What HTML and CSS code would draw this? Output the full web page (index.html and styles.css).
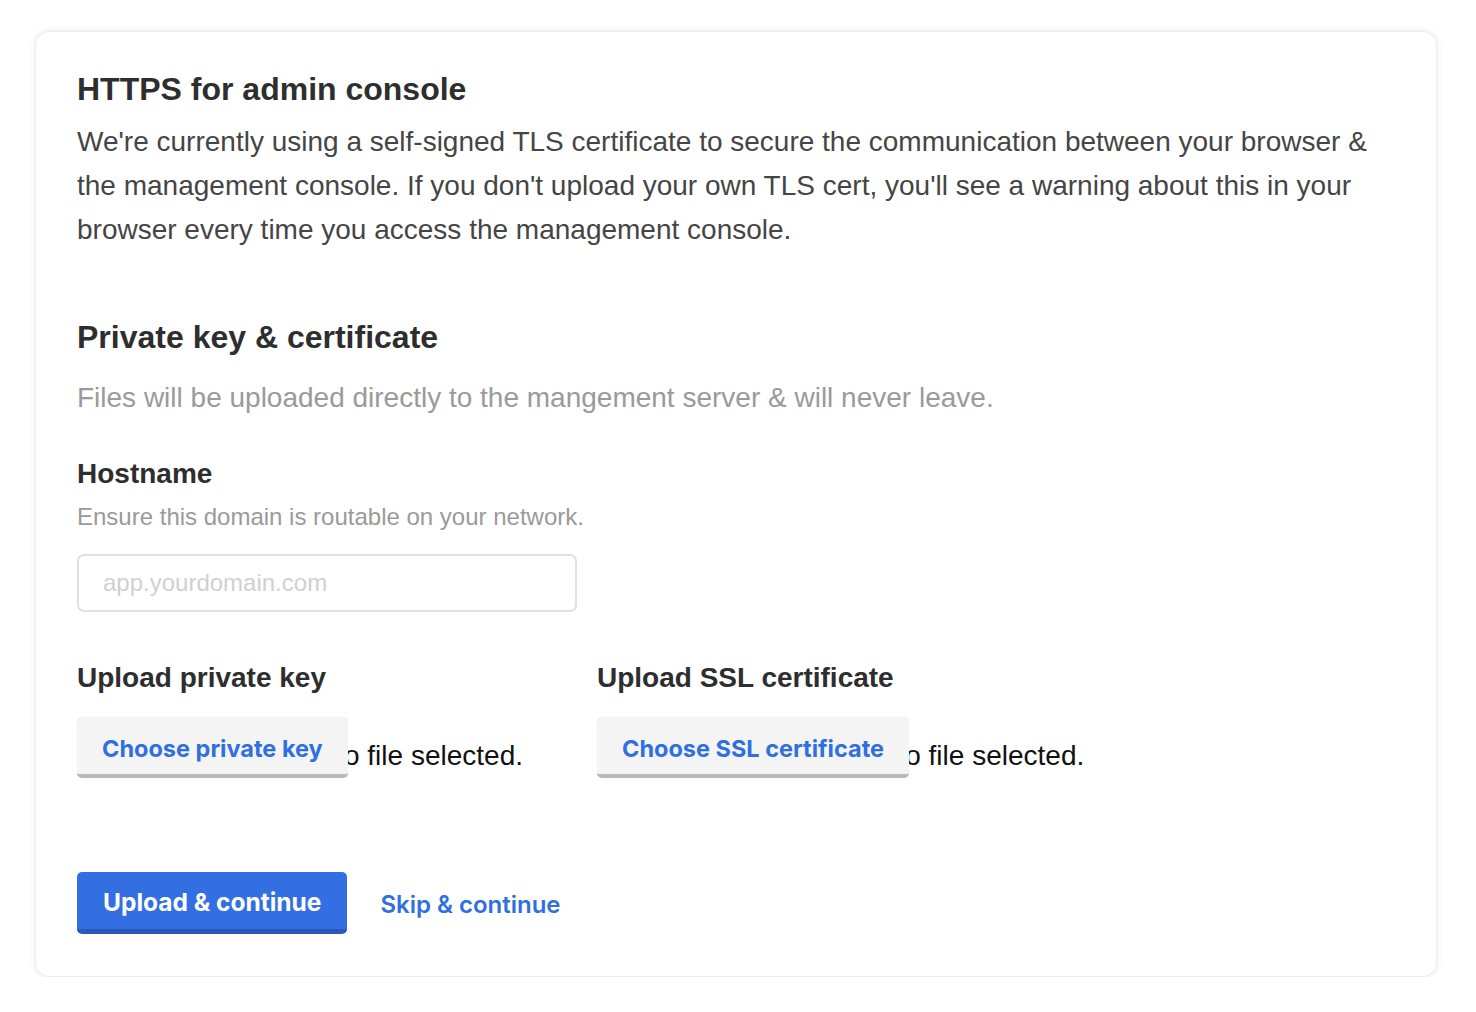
FILE: index.html
```html
<!DOCTYPE html>
<html lang="en">
<head>
<meta charset="utf-8">
<title>HTTPS for admin console</title>
<link rel="stylesheet" href="styles.css">
</head>
<body>
<main class="card">
  <section class="intro">
    <h1 class="title">HTTPS for admin console</h1>
    <p class="lead">We're currently using a self-signed TLS certificate to secure the communication between your browser &amp; the management console. If you don't upload your own TLS cert, you'll see a warning about this in your browser every time you access the management console.</p>
  </section>

  <section class="keys">
    <h2 class="title">Private key &amp; certificate</h2>
    <p class="muted">Files will be uploaded directly to the mangement server &amp; will never leave.</p>

    <div class="field">
      <label class="label" for="host">Hostname</label>
      <p class="hint">Ensure this domain is routable on your network.</p>
      <input id="host" class="input" type="text" placeholder="app.yourdomain.com">
    </div>

    <div class="uploads">
      <div class="upload">
        <h3 class="label big">Upload private key</h3>
        <div class="file-row">
          <button class="file-btn" type="button">Choose private key</button>
          <span class="file-text">No file selected.</span>
        </div>
      </div>
      <div class="upload">
        <h3 class="label big">Upload SSL certificate</h3>
        <div class="file-row">
          <button class="file-btn" type="button">Choose SSL certificate</button>
          <span class="file-text">No file selected.</span>
        </div>
      </div>
    </div>

    <div class="actions">
      <button class="primary" type="button">Upload &amp; continue</button>
      <a class="link" href="#">Skip &amp; continue</a>
    </div>
  </section>
</main>
</body>
</html>
```

FILE: styles.css
```css
* { box-sizing: border-box; }
html, body { margin: 0; padding: 0; background: #ffffff; }
body {
  font-family: "Liberation Sans", Arial, sans-serif;
  color: #333;
  padding: 31px 39px 0 35px;
}
.card {
  border: 1px solid #ececec;
  border-radius: 14px;
  box-shadow: 0 0 7px rgba(0,0,0,0.09);
  background: #fff;
  padding: 35px 40px 42px 41px;
}
.title {
  margin: 0;
  font-size: 32px;
  font-weight: 700;
  color: #2e2e2e;
  line-height: 44px;
}
.lead {
  margin: 9px 0 0;
  font-size: 28px;
  line-height: 44px;
  color: #454545;
}
.keys { margin-top: 63px; }
.muted {
  margin: 21px 0 0;
  font-size: 28px;
  line-height: 36px;
  color: #9a9a9a;
}
.field { margin-top: 40px; }
.label {
  display: block;
  margin: 0;
  font-size: 28px;
  font-weight: 700;
  color: #2e2e2e;
  line-height: 36px;
}
.label.big { line-height: 40px; }
.hint {
  margin: 10px 0 0;
  font-size: 24px;
  line-height: 30px;
  color: #9a9a9a;
}
.input {
  display: block;
  margin-top: 22px;
  width: 500px;
  height: 58px;
  border: 2px solid #e0e0e0;
  border-radius: 7px;
  padding: 0 24px;
  font-family: inherit;
  font-size: 24px;
  color: #333;
  outline: none;
}
.input::placeholder { color: #d0d0d0; }
.uploads {
  margin-top: 46px;
  display: grid;
  grid-template-columns: 520px 1fr;
}
.file-row {
  margin-top: 19px;
  display: flex;
  align-items: flex-start;
}
.file-btn {
  position: relative;
  z-index: 1;
  font-family: Inter, "Liberation Sans", sans-serif;
  font-size: 23.5px;
  font-weight: 700;
  color: #2f6fe0;
  background: #f4f4f4;
  border: none;
  border-bottom: 4px solid #b9b9b9;
  border-radius: 5px;
  height: 61px;
  padding: 6px 25px 0;
  box-shadow: 0 0 1px rgba(0,0,0,0.12);
}
.file-text {
  margin-left: -24px;
  margin-top: 21px;
  font-size: 28px;
  line-height: 36px;
  color: #111;
}
.actions {
  margin-top: 94px;
  display: flex;
  align-items: center;
  gap: 33px;
}
.primary {
  font-family: Inter, "Liberation Sans", sans-serif;
  font-size: 24.5px;
  font-weight: 700;
  color: #fff;
  background: #336fe3;
  border: none;
  border-bottom: 5px solid #2a57b8;
  border-radius: 5px;
  height: 62px;
  padding: 2px 26px 0;
}
.link {
  font-family: Inter, "Liberation Sans", sans-serif;
  font-size: 24px;
  font-weight: 600;
  color: #2f6fe0;
  text-decoration: none;
  margin-top: 2px;
}
```
